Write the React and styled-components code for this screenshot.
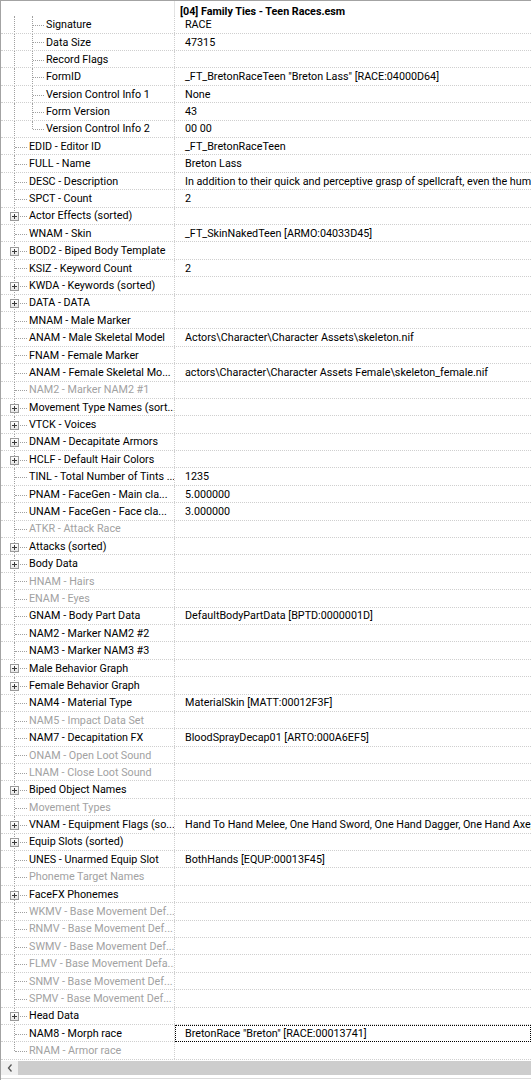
import React from "react";
import styled, { createGlobalStyle } from "styled-components";

const GlobalStyle = createGlobalStyle`
  html, body {
    margin: 0;
    padding: 0;
    background: #fff;
  }
  body {
    font-family: Roboto, "Liberation Sans", sans-serif;
    font-size: 10.75px;
    color: #000;
    overflow: hidden;
  }
`;

const Window = styled.div`
  width: 531px;
  height: 1080px;
  box-sizing: border-box;
  border-top: 1px solid #a3a3a3;
  border-left: 1px solid #a3a3a3;
  display: flex;
  flex-direction: column;
  overflow: hidden;
`;

const Header = styled.div`
  display: flex;
  height: 15.3px;
  flex-shrink: 0;
`;

const HeaderName = styled.div`
  width: 174px;
  box-sizing: border-box;
  border-right: 1px solid #e3e3e3;
`;

const HeaderTitle = styled.div`
  flex: 1;
  padding: 6px 0 0 5px;
  font-weight: 700;
  white-space: nowrap;
  line-height: 10px;
`;

const Body = styled.div`
  display: flex;
  flex-direction: column;
`;

const Row = styled.div`
  display: flex;
  height: 17.4px;
  box-sizing: border-box;
  border-bottom: 1px dotted #cfcfcf;
  flex-shrink: 0;
`;

const NameCell = styled.div`
  width: 174px;
  flex-shrink: 0;
  box-sizing: border-box;
  border-right: 1px dotted #cfcfcf;
  display: flex;
  align-items: stretch;
  white-space: nowrap;
  overflow: hidden;
  color: ${(p) => (p.$dim ? "#a2a2a2" : "#000")};
`;

const Spacer = styled.span`
  width: 13px;
  flex-shrink: 0;
`;

const Pipe = styled.span`
  width: 18px;
  flex-shrink: 0;
  box-sizing: border-box;
  border-left: 1px dotted #a0a0a0;
  margin-bottom: -1px;
`;

const Twig = styled.span`
  position: relative;
  width: ${(p) => p.$w}px;
  flex-shrink: 0;
  margin-bottom: -1px;

  &::before {
    content: "";
    position: absolute;
    left: 0;
    top: 0;
    bottom: ${(p) => (p.$last ? "50%" : "0")};
    border-left: 1px dotted #a0a0a0;
  }
  &::after {
    content: "";
    position: absolute;
    left: 1px;
    top: 50%;
    width: ${(p) => p.$w - 3}px;
    border-top: 1px dotted #a0a0a0;
  }
`;

const Expander = styled.span`
  position: absolute;
  z-index: 1;
  left: -4px;
  top: 50%;
  width: 9px;
  height: 9px;
  margin-top: -4px;
  box-sizing: border-box;
  border: 1px solid #9a9a9a;
  background: linear-gradient(#ffffff, #e6e6e6);

  &::before {
    content: "";
    position: absolute;
    left: 1px;
    top: 3px;
    width: 5px;
    height: 1px;
    background: #3a3a3a;
  }
  &::after {
    content: "";
    position: absolute;
    left: 3px;
    top: 1px;
    width: 1px;
    height: 5px;
    background: #3a3a3a;
  }
`;

const Label = styled.span`
  display: flex;
  align-items: center;
  padding-top: 2px;
  line-height: 1;
`;

const ValueCell = styled.div`
  flex: 1;
  min-width: 0;
  padding: 2px 0 0 10px;
  display: flex;
  align-items: center;
  white-space: nowrap;
  overflow: hidden;
  line-height: 1;
  margin-bottom: ${(p) => (p.$focused ? "-1px" : "0")};
  outline: ${(p) => (p.$focused ? "1px dotted #000" : "none")};
  outline-offset: -1px;
`;

const ScrollBar = styled.div`
  display: flex;
  height: 14px;
  margin-top: 1px;
  flex-shrink: 0;
  background: #f0f0f0;
`;

const ArrowButton = styled.div`
  width: 17px;
  display: flex;
  align-items: center;
  justify-content: center;
`;

const Thumb = styled.div`
  flex: 1;
  background: #cdcdcd;
`;

const BottomEdge = styled.div`
  margin-top: 3px;
  height: 1px;
  background: #dadada;
`;

const header = [
  ["Signature", "RACE"],
  ["Data Size", "47315"],
  ["Record Flags", ""],
  ["FormID", '_FT_BretonRaceTeen "Breton Lass" [RACE:04000D64]'],
  ["Version Control Info 1", "None"],
  ["Form Version", "43"],
  ["Version Control Info 2", "00 00"],
];

// [name, value, expandable, dimmed]
const fields = [
  ["EDID - Editor ID", "_FT_BretonRaceTeen"],
  ["FULL - Name", "Breton Lass"],
  ["DESC - Description", "In addition to their quick and perceptive grasp of spellcraft, even the humblest of High Rock's Bretons"],
  ["SPCT - Count", "2"],
  ["Actor Effects (sorted)", "", true],
  ["WNAM - Skin", "_FT_SkinNakedTeen [ARMO:04033D45]"],
  ["BOD2 - Biped Body Template", "", true],
  ["KSIZ - Keyword Count", "2"],
  ["KWDA - Keywords (sorted)", "", true],
  ["DATA - DATA", "", true],
  ["MNAM - Male Marker", ""],
  ["ANAM - Male Skeletal Model", "Actors\\Character\\Character Assets\\skeleton.nif"],
  ["FNAM - Female Marker", ""],
  ["ANAM - Female Skeletal Mo...", "actors\\Character\\Character Assets Female\\skeleton_female.nif"],
  ["NAM2 - Marker NAM2 #1", "", false, true],
  ["Movement Type Names (sort...", "", true],
  ["VTCK - Voices", "", true],
  ["DNAM - Decapitate Armors", "", true],
  ["HCLF - Default Hair Colors", "", true],
  ["TINL - Total Number of Tints ...", "1235"],
  ["PNAM - FaceGen - Main cla...", "5.000000"],
  ["UNAM - FaceGen - Face cla...", "3.000000"],
  ["ATKR - Attack Race", "", false, true],
  ["Attacks (sorted)", "", true],
  ["Body Data", "", true],
  ["HNAM - Hairs", "", false, true],
  ["ENAM - Eyes", "", false, true],
  ["GNAM - Body Part Data", "DefaultBodyPartData [BPTD:0000001D]"],
  ["NAM2 - Marker NAM2 #2", ""],
  ["NAM3 - Marker NAM3 #3", ""],
  ["Male Behavior Graph", "", true],
  ["Female Behavior Graph", "", true],
  ["NAM4 - Material Type", "MaterialSkin [MATT:00012F3F]"],
  ["NAM5 - Impact Data Set", "", false, true],
  ["NAM7 - Decapitation FX", "BloodSprayDecap01 [ARTO:000A6EF5]"],
  ["ONAM - Open Loot Sound", "", false, true],
  ["LNAM - Close Loot Sound", "", false, true],
  ["Biped Object Names", "", true],
  ["Movement Types", "", false, true],
  ["VNAM - Equipment Flags (so...", "Hand To Hand Melee, One Hand Sword, One Hand Dagger, One Hand Axe, One Hand Mace", true],
  ["Equip Slots (sorted)", "", true],
  ["UNES - Unarmed Equip Slot", "BothHands [EQUP:00013F45]"],
  ["Phoneme Target Names", "", false, true],
  ["FaceFX Phonemes", "", true],
  ["WKMV - Base Movement Def...", "", false, true],
  ["RNMV - Base Movement Def...", "", false, true],
  ["SWMV - Base Movement Def...", "", false, true],
  ["FLMV - Base Movement Defa...", "", false, true],
  ["SNMV - Base Movement Def...", "", false, true],
  ["SPMV - Base Movement Def...", "", false, true],
  ["Head Data", "", true],
  ["NAM8 - Morph race", 'BretonRace "Breton" [RACE:00013741]'],
  ["RNAM - Armor race", "", false, true],
];

function ChevronLeft() {
  return (
    <svg width="6" height="8" viewBox="0 0 6 8">
      <path d="M4.5 0.5 L1.5 4 L4.5 7.5" fill="none" stroke="#555" strokeWidth="1.3" />
    </svg>
  );
}

export default function App() {
  return (
    <>
      <GlobalStyle />
      <Window>
        <Header>
          <HeaderName />
          <HeaderTitle>[04] Family Ties - Teen Races.esm</HeaderTitle>
        </Header>

        <Body>
          {/* record header children */}
          {header.map(([name, value], i) => (
            <Row key={name}>
              <NameCell>
                <Spacer />
                <Pipe />
                <Twig $w={14} $last={i === header.length - 1} />
                <Label>{name}</Label>
              </NameCell>
              <ValueCell>{value}</ValueCell>
            </Row>
          ))}

          {/* record fields */}
          {fields.map(([name, value, expandable, dim], i) => (
            <Row key={name}>
              <NameCell $dim={dim}>
                <Spacer />
                <Twig $w={15} $last={i === fields.length - 1}>
                  {expandable && <Expander />}
                </Twig>
                <Label>{name}</Label>
              </NameCell>
              <ValueCell $focused={name === "NAM8 - Morph race"}>{value}</ValueCell>
            </Row>
          ))}
        </Body>

        <ScrollBar>
          <ArrowButton>
            <ChevronLeft />
          </ArrowButton>
          <Thumb />
        </ScrollBar>
        <BottomEdge />
      </Window>
    </>
  );
}
